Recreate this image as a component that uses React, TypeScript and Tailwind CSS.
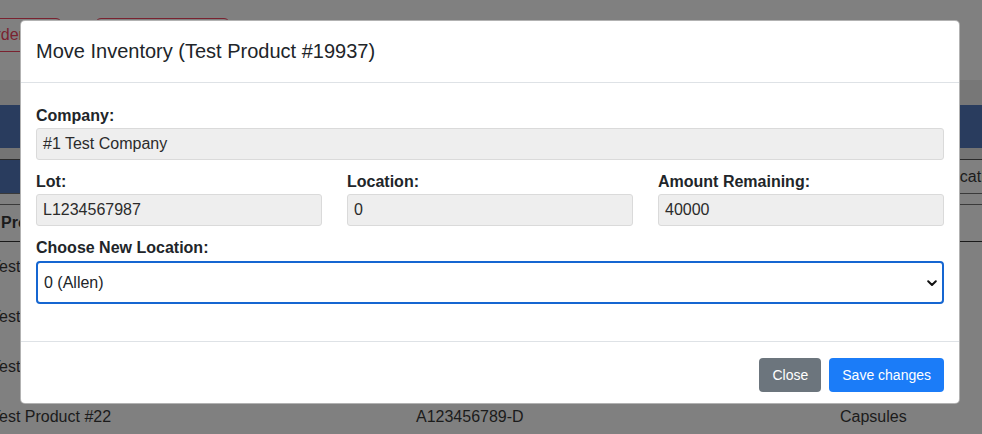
import React from "react";

function Field({ label, value }: { label: string; value: string }) {
  return (
    <div className="flex flex-col">
      <label className="h-6 text-[16px] font-bold leading-6 text-[#212529]">{label}</label>
      <div className="flex h-[32px] items-center rounded-[3px] border border-[#dadada] bg-[#eeeeee] px-[6px] text-[16px] text-[#2b2b2b]">
        {value}
      </div>
    </div>
  );
}

export default function App() {
  return (
    <div className="relative h-[434px] w-[982px] overflow-hidden bg-[#808080] font-['Liberation_Sans',Arial,sans-serif] text-[16px]">
      {/* background page under overlay */}
      <div className="flex flex-col">
        <div className="h-[18px]" />
        <div className="flex h-[34px]">
          <div className="-ml-[60px] flex h-[34px] w-[122px] items-center rounded-[6px] border border-[#7a2230] pl-[42px] text-[16px] text-[#7a2230]">
            Order
          </div>
          <div className="ml-[33px] h-[34px] w-[135px] rounded-[6px] border border-[#7a2230]" />
        </div>
        <div className="h-[28px]" />
        <div className="h-[25px] bg-[#777777]" />
        <div className="h-[43px] bg-[#293c5e]" />
        <div className="h-[12px] border-b border-[#2a2a2a] bg-[#747474]" />
        <div className="flex h-[34px] border-b border-[#3a3a3a]">
          <div className="w-[40px] bg-[#293c5e]" />
          <div className="flex-1" />
          <div className="flex w-[40px] items-center text-[16px] text-[#1b1b1b]">
            <span>Location</span>
          </div>
        </div>
        <div className="h-[11px] border-b border-[#3a3a3a]" />
        <div className="flex h-[37px] items-center border-b border-[#1a1a1a]">
          <span className="ml-[1px] font-bold text-[#1b1b1b]">Product</span>
        </div>
        {["Test Product #19", "Test Product #20", "Test Product #21", "Test Product #22"].map((t) => (
          <div key={t} className="flex h-[50px] items-center text-[#1b1b1b]">
            <span className="-ml-[9px] w-[425px]">{t}</span>
            <span className="w-[424px]">A123456789-D</span>
            <span>Capsules</span>
          </div>
        ))}
      </div>

      {/* modal overlay */}
      <div className="absolute inset-0">
        <div className="ml-[20px] mt-[20px] w-[940px] overflow-hidden rounded-[5px] border border-black/30 bg-white">
          <div className="border-b border-[#dee2e6] px-[15px] pb-4 pt-[15px]">
            <h5 className="text-[20px] font-medium leading-[30px] text-[#212529]">
              Move Inventory (Test Product #19937)
            </h5>
          </div>
          <div className="px-[15px] pb-[37px] pt-[21px]">
            <Field label="Company:" value="#1 Test Company" />
            <div className="mt-[10px] grid grid-cols-3 gap-[25px]">
              <Field label="Lot:" value="L1234567987" />
              <Field label="Location:" value="0" />
              <Field label="Amount Remaining:" value="40000" />
            </div>
            <div className="mt-[10px] flex flex-col">
              <label className="h-6 text-[16px] font-bold leading-6 text-[#212529]">Choose New Location:</label>
              <div className="mt-[1px] flex h-[43px] items-center justify-between rounded-[4px] border-2 border-[#1566d1] pl-[6px] pr-[5px] text-[16px] text-[#212529]">
                <span>0 (Allen)</span>
                <svg width="10" height="7" viewBox="0 0 10 7" className="mt-[1px]">
                  <path d="M1.2 1.3 L5 5 L8.8 1.3" fill="none" stroke="#111" strokeWidth="2" strokeLinecap="round" strokeLinejoin="round" />
                </svg>
              </div>
            </div>
          </div>
          <div className="flex justify-end gap-2 border-t border-[#dee2e6] px-[15px] pb-[11px] pt-4">
            <button className="h-[34px] rounded-[4px] bg-[#6c757d] px-[13px] text-[14px] text-white">Close</button>
            <button className="h-[34px] rounded-[4px] bg-[#1b7cf8] px-[13px] text-[14px] text-white">Save changes</button>
          </div>
        </div>
      </div>
    </div>
  );
}
